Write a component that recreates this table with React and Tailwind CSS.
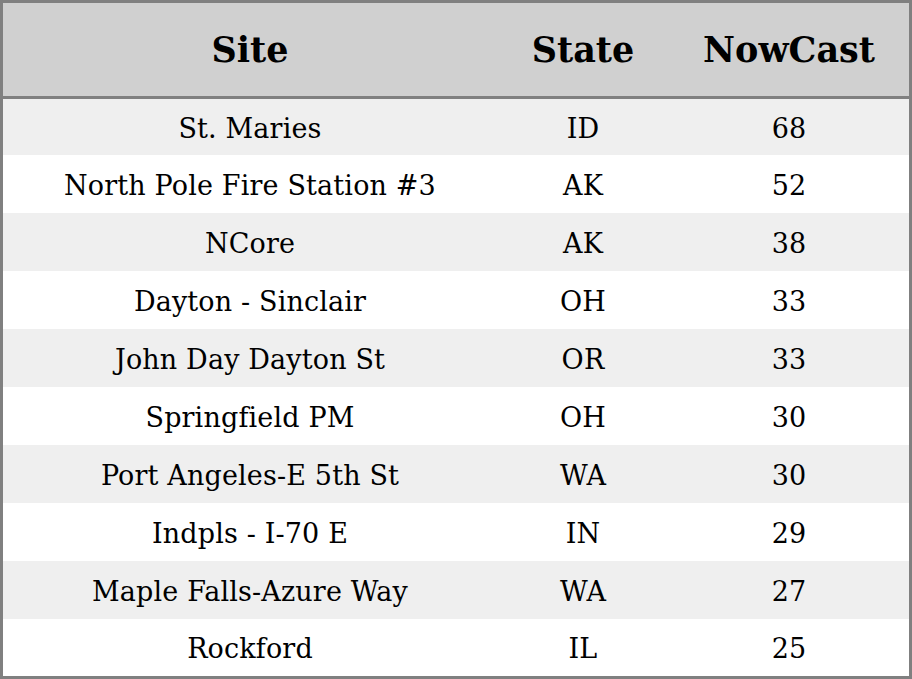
import React from "react";

const rows = [
  ["St. Maries", "ID", "68"],
  ["North Pole Fire Station #3", "AK", "52"],
  ["NCore", "AK", "38"],
  ["Dayton - Sinclair", "OH", "33"],
  ["John Day Dayton St", "OR", "33"],
  ["Springfield PM", "OH", "30"],
  ["Port Angeles-E 5th St", "WA", "30"],
  ["Indpls - I-70 E", "IN", "29"],
  ["Maple Falls-Azure Way", "WA", "27"],
  ["Rockford", "IL", "25"],
];

export default function App() {
  return (
    <div
      className="w-[912px] h-[679px] border-[3px] border-[#808080] bg-white flex flex-col text-black"
      style={{ fontFamily: '"DejaVu Serif", serif' }}
    >
      <div className="h-[93px] shrink-0 bg-[#d0d0d0] grid grid-cols-[494px_172px_240px] items-center text-[35px] leading-none font-bold border-b-[3px] border-[#808080] box-content">
        <div className="text-center">Site</div>
        <div className="text-center">State</div>
        <div className="text-center">NowCast</div>
      </div>
      <div className="flex-1 grid grid-rows-[56px_repeat(8,58px)_57px]">
        {rows.map((r, i) => (
          <div
            key={i}
            className={`grid grid-cols-[494px_172px_240px] items-center text-[27px] leading-none tracking-[0.15px] pt-[2px] ${i % 2 === 0 ? "bg-[#efefef]" : "bg-white"}`}
          >
            <div className="text-center">{r[0]}</div>
            <div className="text-center">{r[1]}</div>
            <div className="text-center">{r[2]}</div>
          </div>
        ))}
      </div>
    </div>
  );
}
